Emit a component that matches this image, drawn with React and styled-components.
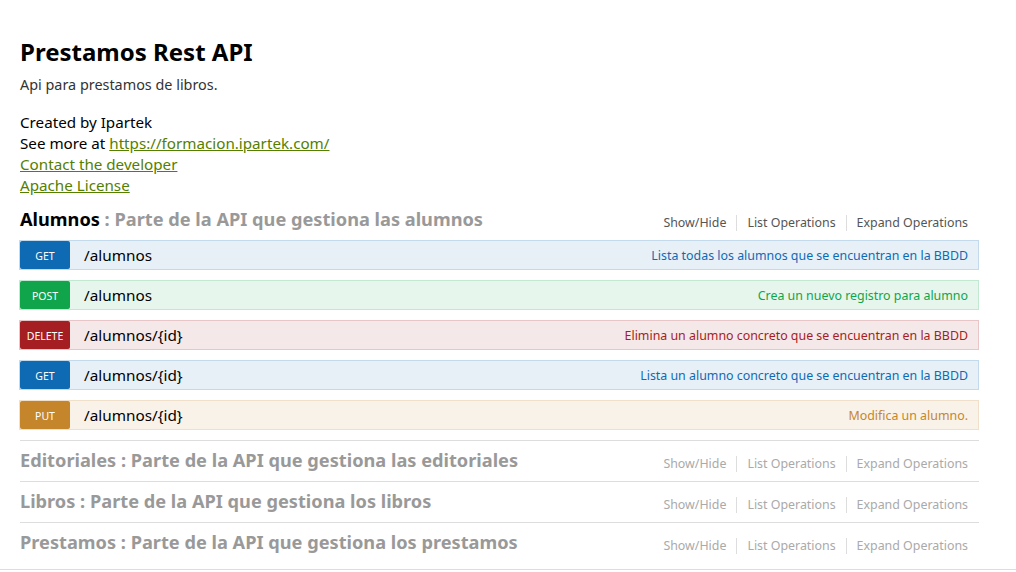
import React from "react";
import styled, {createGlobalStyle} from "styled-components";

const GlobalStyle = createGlobalStyle`
  body {
    margin: 0;
    background: #fff;
    font-family: "Noto Sans", "Open Sans", sans-serif;
    color: #000;
  }
`;

const METHODS = {
  get: {badge: "#0f6ab4", bg: "#e7f0f7", border: "#c3d9ec"},
  post: {badge: "#10a54a", bg: "#e7f6ec", border: "#c3e8d1"},
  delete: {badge: "#a41e22", bg: "#f5e8e8", border: "#e8c6c7"},
  put: {badge: "#c5862b", bg: "#f9f2e9", border: "#f0e0ca"},
};

const Page = styled.div`
  padding: 37px 0 0 20px;
  width: 959px;
`;

const Info = styled.div`
  margin-bottom: 4px;
`;

const Title = styled.h1`
  margin: 0;
  font-size: 24px;
  line-height: 30px;
  font-weight: 700;
`;

const Description = styled.div`
  margin: 8px 0 17px;
  font-size: 14.4px;
  line-height: 20px;
  color: #333;
`;

const ContactLine = styled.div`
  font-size: 15.2px;
  line-height: 21px;
`;

const Link = styled.a`
  color: #547f00;
  text-decoration: underline;
`;

const Resource = styled.div`
  border-bottom: ${props => (props.last ? "none" : "1px solid #ddd")};
`;

const Heading = styled.div`
  display: flex;
  align-items: center;
  justify-content: space-between;
  height: 40px;
`;

const ResourceTitle = styled.h2`
  margin: 0 0 2px;
  font-size: 18.2px;
  line-height: 24px;
  font-weight: 700;
  color: #999;
`;

const ResourceName = styled.span`
  color: ${props => (props.open ? "#000" : "#999")};
`;

const Options = styled.ul`
  display: flex;
  align-items: center;
  list-style: none;
  margin: 5px 11px 0 0;
  padding: 0;
`;

const Option = styled.li`
  font-size: 12.4px;
  line-height: 16px;
  padding: 0 10px;
  color: ${props => (props.open ? "#555" : "#aaa")};
  border-left: ${props => (props.first ? "none" : "1px solid #ddd")};
  &:last-child {
    padding-right: 0;
  }
`;

const Operations = styled.div`
  display: flex;
  flex-direction: column;
  gap: 10px;
  padding-bottom: 10px;
`;

const Operation = styled.div`
  display: flex;
  align-items: center;
  height: 28px;
  margin-left: -1px;
  border: 1px solid ${props => METHODS[props.method].border};
  background: ${props => METHODS[props.method].bg};
`;

const Badge = styled.span`
  width: 50px;
  height: 28px;
  box-sizing: border-box;
  padding-top: 2px;
  display: flex;
  align-items: center;
  justify-content: center;
  border-radius: 2px;
  background: ${props => METHODS[props.method].badge};
  color: #fff;
  font-size: 10.5px;
  text-transform: uppercase;
`;

const Path = styled.span`
  margin-left: 14px;
  font-size: 15.3px;
  flex: 1;
`;

const Summary = styled.span`
  margin-right: 10px;
  font-size: 12.4px;
  color: ${props => METHODS[props.method].badge};
`;

const Footer = styled.div`
  margin-top: 6px;
  border-top: 1px solid #ddd;
  height: 2px;
`;

const operations = [
  {method: "get", path: "/alumnos", summary: "Lista todas los alumnos que se encuentran en la BBDD"},
  {method: "post", path: "/alumnos", summary: "Crea un nuevo registro para alumno"},
  {method: "delete", path: "/alumnos/{id}", summary: "Elimina un alumno concreto que se encuentran en la BBDD"},
  {method: "get", path: "/alumnos/{id}", summary: "Lista un alumno concreto que se encuentran en la BBDD"},
  {method: "put", path: "/alumnos/{id}", summary: "Modifica un alumno."},
];

const resources = [
  {name: "Alumnos", desc: "Parte de la API que gestiona las alumnos", open: true},
  {name: "Editoriales", desc: "Parte de la API que gestiona las editoriales"},
  {name: "Libros", desc: "Parte de la API que gestiona los libros"},
  {name: "Prestamos", desc: "Parte de la API que gestiona los prestamos"},
];

const ResourceHeading = ({name, desc, open}) => (
  <Heading>
    <ResourceTitle>
      <ResourceName open={open}>{name}</ResourceName> : {desc}
    </ResourceTitle>
    <Options>
      <Option open={open} first>Show/Hide</Option>
      <Option open={open}>List Operations</Option>
      <Option open={open}>Expand Operations</Option>
    </Options>
  </Heading>
);

export default () => {
  return (
    <>
      <GlobalStyle />
      <Page>
        <Info>
          <Title>Prestamos Rest API</Title>
          <Description>Api para prestamos de libros.</Description>
          <ContactLine>Created by Ipartek</ContactLine>
          <ContactLine>
            See more at <Link href="#">https://formacion.ipartek.com/</Link>
          </ContactLine>
          <ContactLine>
            <Link href="#">Contact the developer</Link>
          </ContactLine>
          <ContactLine>
            <Link href="#">Apache License</Link>
          </ContactLine>
        </Info>
        {resources.map((res, i) => (
          <Resource key={res.name} last={i === resources.length - 1}>
            <ResourceHeading {...res} />
            {res.open && (
              <Operations>
                {operations.map((op, j) => (
                  <Operation key={j} method={op.method}>
                    <Badge method={op.method}>{op.method}</Badge>
                    <Path>{op.path}</Path>
                    <Summary method={op.method}>{op.summary}</Summary>
                  </Operation>
                ))}
              </Operations>
            )}
          </Resource>
        ))}
      </Page>
      <Footer />
    </>
  );
};
